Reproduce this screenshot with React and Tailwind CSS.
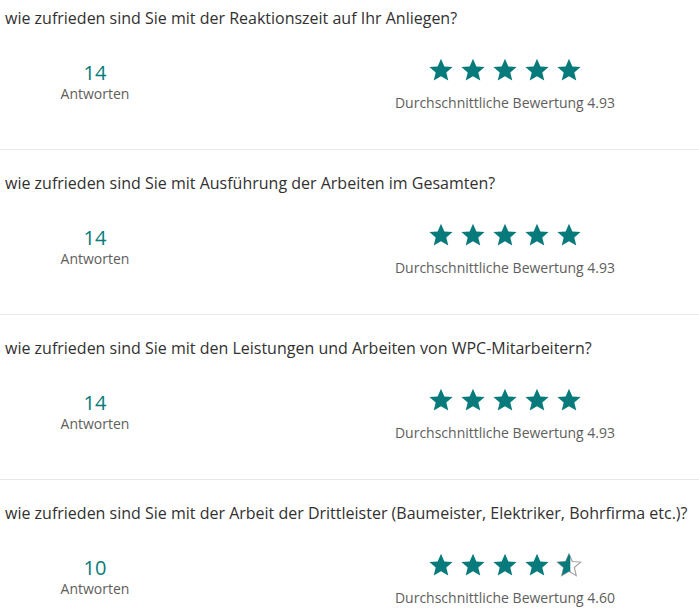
import React from 'react';

const TEAL = '#077b7b';

// Fragen mit Ergebnissen
const questions = [
    { text: 'wie zufrieden sind Sie mit der Reaktionszeit auf Ihr Anliegen?', count: 14, avg: 4.93 },
    { text: 'wie zufrieden sind Sie mit Ausführung der Arbeiten im Gesamten?', count: 14, avg: 4.93 },
    { text: 'wie zufrieden sind Sie mit den Leistungen und Arbeiten von WPC-Mitarbeitern?', count: 14, avg: 4.93 },
    { text: 'wie zufrieden sind Sie mit der Arbeit der Drittleister (Baumeister, Elektriker, Bohrfirma etc.)?', count: 10, avg: 4.6 },
];

const STAR = 'M12 1.6l3.1 7.1 7.6.6-5.8 5 1.8 7.5L12 17.8l-6.7 4 1.8-7.5-5.8-5 7.6-.6z';

const Star = ({ fill, id }) => (
    <svg width="26" height="26" viewBox="0 0 24 24" className="block">
        <defs>
            <clipPath id={id}>
                <rect x="0" y="0" width={24 * fill} height="24" />
            </clipPath>
        </defs>
        {fill < 1 && <path d={STAR} fill="none" stroke="#a19f9d" strokeWidth="1" />}
        <path d={STAR} fill={TEAL} clipPath={`url(#${id})`} />
    </svg>
);

const Stars = ({ value, qi }) => (
    <div className="flex gap-[6px] justify-center">
        {[0, 1, 2, 3, 4].map(i => {
            const fill = Math.max(0, Math.min(1, value - i));
            // Anzeige auf halbe Sterne gerundet
            const shown = fill >= 0.8 ? 1 : fill >= 0.25 ? 0.55 : 0;
            return <Star key={i} fill={shown} id={`s${qi}-${i}`} />;
        })}
    </div>
);

export default function App() {
    return (
        <div className="w-[699px] bg-white" style={{ fontFamily: '"Open Sans", "Segoe UI", sans-serif' }}>
            {questions.map((q, qi) => (
                <div
                    key={qi}
                    className={`border-b border-[#e8e8e8] pb-[36px] ${qi === 0 ? 'pt-[8px]' : 'pt-[23px]'} ${qi === 3 ? 'border-b-0' : ''}`}
                >
                    <div className="pl-[5px] text-[16px] leading-[20px] text-[#323130] whitespace-nowrap">
                        {q.text}
                    </div>
                    <div className="flex items-start mt-[31px]">
                        <div className="w-[190px] flex flex-col items-center pt-[2px]">
                            <div className="text-[20px] leading-[24px]" style={{ color: TEAL }}>{q.count}</div>
                            <div className="text-[14px] leading-[18px] text-[#605e5c]">Antworten</div>
                        </div>
                        <div className="ml-[205px] w-[220px] flex flex-col items-center -mt-[2px]">
                            <Stars value={q.avg} qi={qi} />
                            <div className="mt-[10px] text-[14px] leading-[20px] text-[#605e5c] whitespace-nowrap">
                                Durchschnittliche Bewertung {q.avg.toFixed(2)}
                            </div>
                        </div>
                    </div>
                </div>
            ))}
        </div>
    );
}
